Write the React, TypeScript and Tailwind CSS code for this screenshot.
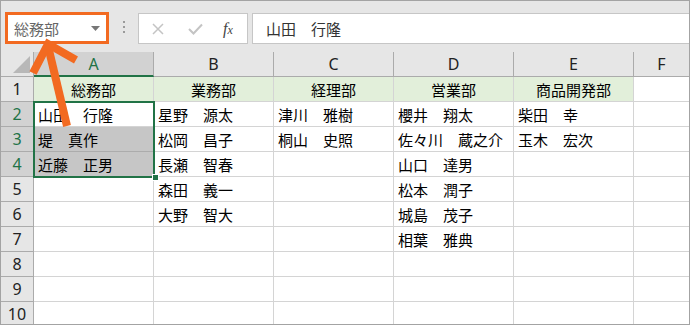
const jp = { fontFamily: '"Noto Sans CJK JP", "Noto Sans", sans-serif' };
const ui = { fontFamily: '"Noto Sans", "Liberation Sans", sans-serif' };

const columns = ['A', 'B', 'C', 'D', 'E'];

const data: string[][] = [
  ['総務部', '業務部', '経理部', '営業部', '商品開発部'],
  ['山田　行隆', '星野　源太', '津川　雅樹', '櫻井　翔太', '柴田　幸'],
  ['堤　真作', '松岡　昌子', '桐山　史照', '佐々川　蔵之介', '玉木　宏次'],
  ['近藤　正男', '長瀬　智春', '', '山口　達男', ''],
  ['', '森田　義一', '', '松本　潤子', ''],
  ['', '大野　智大', '', '城島　茂子', ''],
  ['', '', '', '相葉　雅典', ''],
  ['', '', '', '', ''],
  ['', '', '', '', ''],
  ['', '', '', '', ''],
  ['', '', '', '', ''],
];

function Toolbar() {
  return (
    <div className="flex items-start h-[51px] pt-[11px] pl-[4px] shrink-0">
      {/* Name box */}
      <div className="flex items-center justify-between w-[104px] h-[32px] border-[3px] border-[#f26a21] bg-white pl-[6px] pr-[6px]">
        <span className="text-[15px] text-[#666] leading-none" style={jp}>総務部</span>
        <svg width="9" height="5" viewBox="0 0 9 5">
          <path d="M0 0 L9 0 L4.5 5 Z" fill="#777" />
        </svg>
      </div>
      {/* Grip */}
      <div className="flex flex-col gap-[3px] mt-[9px] ml-[14px] mr-[13px]">
        <div className="w-[2px] h-[2px] bg-[#9a9a9a]" />
        <div className="w-[2px] h-[2px] bg-[#9a9a9a]" />
        <div className="w-[2px] h-[2px] bg-[#9a9a9a]" />
      </div>
      {/* Formula buttons */}
      <div className="flex items-center w-[110px] h-[31px] mt-[1px] bg-white border border-[#c6c6c6]">
        <svg className="ml-[13px]" width="12" height="12" viewBox="0 0 12 12">
          <path d="M1 1 L11 11 M11 1 L1 11" stroke="#c4c4c4" strokeWidth="1.5" />
        </svg>
        <svg className="ml-[24px]" width="15" height="12" viewBox="0 0 15 12">
          <path d="M1 6 L5.5 10.5 L14 1.5" stroke="#c4c4c4" strokeWidth="2" fill="none" />
        </svg>
        <span className="ml-[20px] text-[16px] italic text-[#444] leading-none" style={{ fontFamily: '"Liberation Serif", serif' }}>
          f<span className="text-[12px]">x</span>
        </span>
      </div>
      {/* Formula content */}
      <div className="flex items-center flex-1 h-[31px] mt-[1px] ml-[4px] bg-white border border-[#c6c6c6] border-r-0 pl-[13px]">
        <span className="text-[15px] text-[#333] leading-none" style={jp}>山田　行隆</span>
      </div>
    </div>
  );
}

function HeaderRow() {
  return (
    <div className="flex h-[25px] shrink-0">
      <div className="relative w-[33px] h-full bg-[#e6e6e6] border-r border-b border-[#ababab]">
        <svg className="absolute right-[3px] bottom-[3px]" width="17" height="17" viewBox="0 0 17 17">
          <path d="M17 0 L17 17 L0 17 Z" fill="#b8b8b8" />
        </svg>
      </div>
      {columns.map((c) => (
        <div
          key={c}
          className={
            c === 'A'
              ? 'flex items-center justify-center w-[120px] h-full bg-[#d2d2d2] border-r border-[#ababab] border-b-2 border-b-[#217346] text-[#217346] text-[16px]'
              : 'flex items-center justify-center w-[120px] h-full bg-[#e6e6e6] border-r border-b border-[#ababab] text-[#222] text-[16px]'
          }
          style={ui}
        >
          {c}
        </div>
      ))}
      <div className="flex items-center justify-center flex-1 h-full bg-[#e6e6e6] border-b border-[#ababab] text-[#222] text-[16px]" style={ui}>
        F
      </div>
    </div>
  );
}

function Row({ index, cells }: { index: number; cells: string[] }) {
  const rowNum = index + 1;
  const rowSelected = rowNum >= 2 && rowNum <= 4;
  return (
    <div className="flex h-[25px] shrink-0">
      <div
        className={
          rowSelected
            ? 'flex items-center justify-center w-[33px] h-full bg-[#d2d2d2] border-r border-b border-[#ababab] text-[#217346] text-[16px]'
            : 'flex items-center justify-center w-[33px] h-full bg-[#e6e6e6] border-r border-b border-[#ababab] text-[#222] text-[16px]'
        }
        style={ui}
      >
        {rowNum}
      </div>
      {cells.map((text, i) => {
        const header = rowNum === 1;
        const shaded = i === 0 && (rowNum === 3 || rowNum === 4);
        let cls = 'flex items-center w-[120px] h-full border-r border-b border-[#d4d4d4] text-[15px] text-black leading-none whitespace-nowrap';
        if (header) cls += ' justify-center bg-[#e2efda]';
        else cls += ' pl-[4px]';
        if (shaded) cls += ' bg-[#c6c6c6] border-b-[#acacac]';
        return (
          <div key={i} className={cls} style={jp}>
            {text}
          </div>
        );
      })}
      <div className="flex-1 h-full border-b border-[#d4d4d4] bg-white" />
    </div>
  );
}

export default function App() {
  return (
    <div className="w-[690px] h-[325px] overflow-hidden bg-[#e6e6e6] border border-[#a3a3a3] flex flex-col">
      <Toolbar />
      <div className="relative flex flex-col bg-white overflow-hidden flex-1">
        <HeaderRow />
        {data.map((cells, i) => (
          <Row key={i} index={i} cells={cells} />
        ))}
        {/* selection A2:A4 */}
        <div className="absolute left-[32px] top-[49px] w-[122px] h-[77px] border-2 border-[#217346]" />
        <div className="absolute left-[151px] top-[122px] w-[7px] h-[7px] bg-[#217346] border border-white" />
      </div>
      {/* arrow from name box */}
      <svg className="absolute left-0 top-0 pointer-events-none" width="690" height="325" viewBox="0 0 690 325">
        <path d="M48 46 L67 126" stroke="#f26a21" strokeWidth="8" fill="none" />
        <path d="M33 73 L48 44 L76 60" stroke="#f26a21" strokeWidth="8" fill="none" strokeLinejoin="miter" />
      </svg>
    </div>
  );
}
